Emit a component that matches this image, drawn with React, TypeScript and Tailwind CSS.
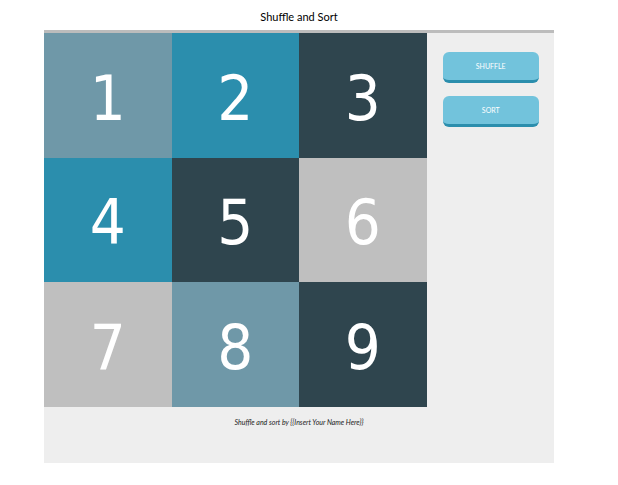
import { useState } from "react";

const tileColors: Record<number, string> = {
  1: "bg-[#6f98a8]",
  2: "bg-[#2b8ead]",
  3: "bg-[#2f454e]",
  4: "bg-[#2b8ead]",
  5: "bg-[#2f454e]",
  6: "bg-[#bfbfbf]",
  7: "bg-[#bfbfbf]",
  8: "bg-[#6f98a8]",
  9: "bg-[#2f454e]",
};

const sorted = [1, 2, 3, 4, 5, 6, 7, 8, 9];

function ActionButton({ label, onClick }: { label: string; onClick: () => void }) {
  return (
    <button
      type="button"
      onClick={onClick}
      className="h-[31px] w-full cursor-pointer rounded-md border-b-3 border-[#2b8ead] bg-[#72c3dc] text-[7px] leading-none text-white uppercase"
    >
      {label}
    </button>
  );
}

export default function App() {
  const [tiles, setTiles] = useState(sorted);

  const shuffle = () => {
    const next = [...tiles];
    for (let i = next.length - 1; i > 0; i--) {
      const j = Math.floor(Math.random() * (i + 1));
      [next[i], next[j]] = [next[j], next[i]];
    }
    setTiles(next);
  };

  return (
    <div className="bg-white pr-16 pl-11 font-['Lato','Open_Sans',sans-serif]">
      <header className="flex h-[30px] items-end justify-center pb-1">
        <h1 className="text-[11px] leading-[18px] text-black">Shuffle and Sort</h1>
      </header>
      <div className="border-t-3 border-[#bcbcbc] bg-[#eeeeee]">
        <div className="flex">
          <main className="grid h-[374px] w-3/4 grid-cols-3 grid-rows-3">
            {tiles.map((n) => (
              <div
                key={n}
                className={`flex items-center justify-center pt-1.5 font-['DejaVu_Sans_Condensed','DejaVu_Sans',sans-serif] text-[63px] leading-none text-white ${tileColors[n]}`}
              >
                {n}
              </div>
            ))}
          </main>
          <aside className="flex w-1/4 flex-col gap-[13px] pt-[19px] pr-[15px] pl-4">
            <ActionButton label="Shuffle" onClick={shuffle} />
            <ActionButton label="Sort" onClick={() => setTiles(sorted)} />
          </aside>
        </div>
        <footer className="h-14 pt-2 text-center text-[7px] leading-[14px] text-[#222222] italic">
          Shuffle and sort by {"{{Insert Your Name Here}}"}
        </footer>
      </div>
    </div>
  );
}
